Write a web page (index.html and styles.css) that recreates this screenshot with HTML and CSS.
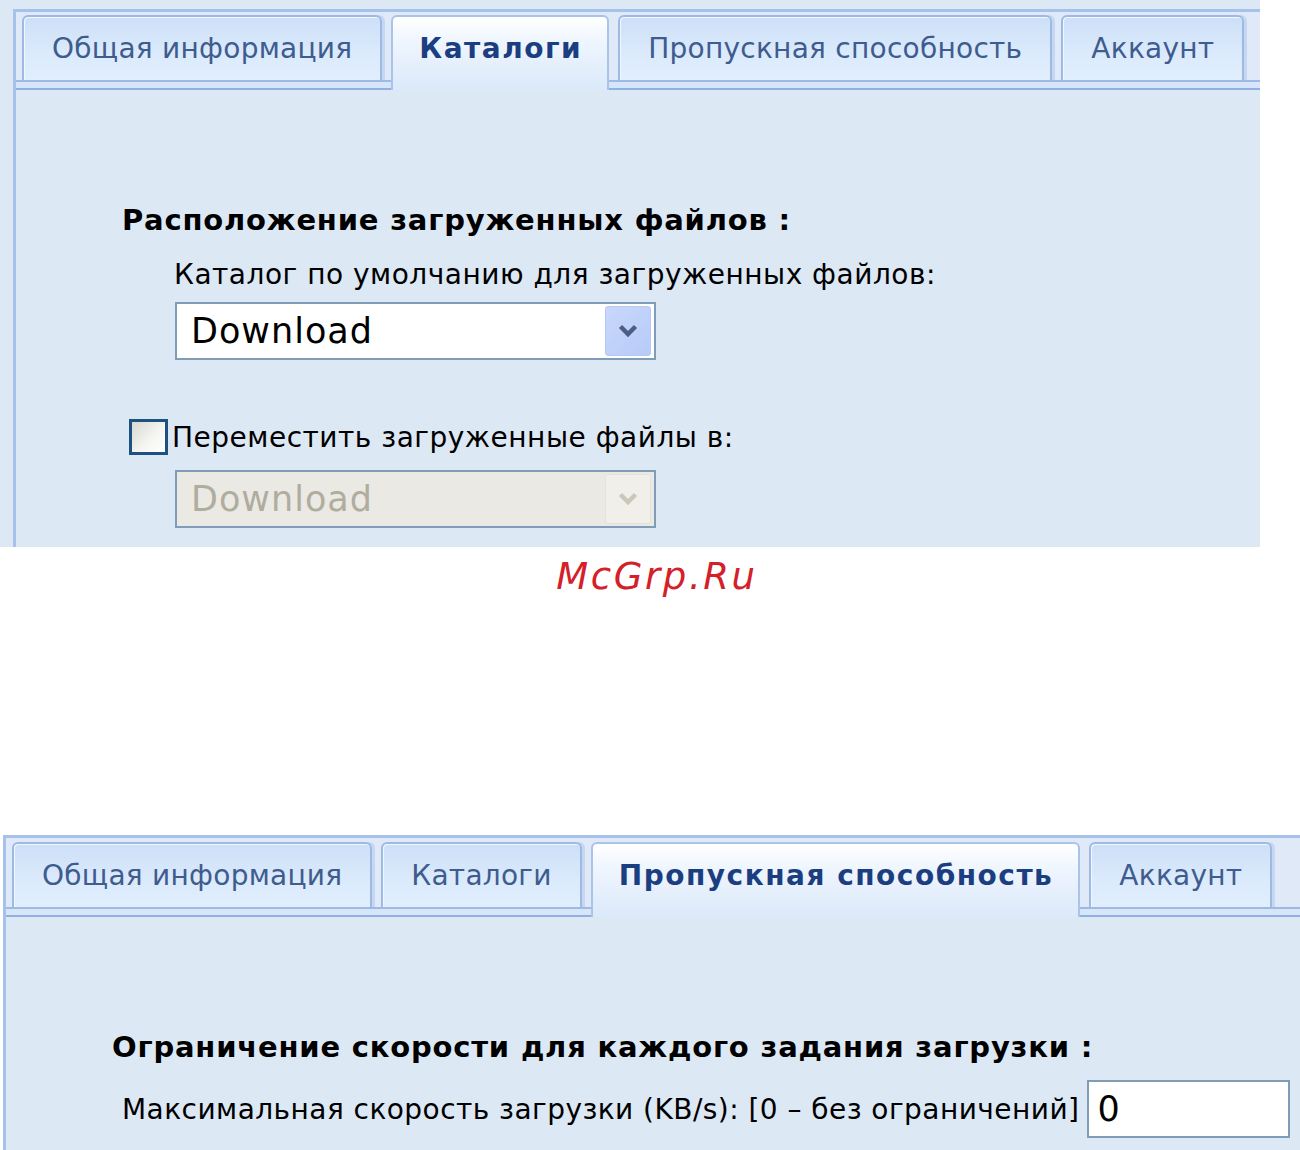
FILE: index.html
```html
<!DOCTYPE html>
<html>
  <head>
    <meta charset="UTF-8" />
    <title>Настройки</title>
    <link rel="stylesheet" href="styles.css">
  </head>
  <body>
    <div class="panel panel-top">
      <div class="frame">
        <div class="tabs">
          <div class="tab">Общая информация</div>
          <div class="tab active">Каталоги</div>
          <div class="tab">Пропускная способность</div>
          <div class="tab">Аккаунт</div>
        </div>
        <div class="tabs-line"></div>
        <div class="content">
          <div class="section-title">Расположение загруженных файлов :</div>
          <div class="field-label">Каталог по умолчанию для загруженных файлов:</div>
          <div class="combo">
            <span class="combo-text">Download</span>
            <span class="combo-btn">
              <svg width="20" height="14" viewBox="0 0 20 14"><path d="M2.5 2.5 L10 10 L17.5 2.5" fill="none" stroke="currentColor" stroke-width="4.5"/></svg>
            </span>
          </div>
          <div class="check-row">
            <span class="checkbox"></span>
            <span class="check-label">Переместить загруженные файлы в:</span>
          </div>
          <div class="combo disabled">
            <span class="combo-text">Download</span>
            <span class="combo-btn">
              <svg width="20" height="14" viewBox="0 0 20 14"><path d="M2.5 2.5 L10 10 L17.5 2.5" fill="none" stroke="currentColor" stroke-width="4.5"/></svg>
            </span>
          </div>
        </div>
      </div>
    </div>

    <div class="watermark">McGrp.Ru</div>

    <div class="panel panel-bottom">
      <div class="frame">
        <div class="tabs">
          <div class="tab">Общая информация</div>
          <div class="tab">Каталоги</div>
          <div class="tab active">Пропускная способность</div>
          <div class="tab">Аккаунт</div>
        </div>
        <div class="tabs-line"></div>
        <div class="content">
          <div class="section-title">Ограничение скорости для каждого задания загрузки :</div>
          <div class="speed-row">
            <span class="speed-label">Максимальная скорость загрузки (KB/s): [0 – без ограничений]</span>
            <div class="text-input">0</div>
          </div>
        </div>
      </div>
    </div>
  </body>
</html>
```

FILE: styles.css
```css
* {
  box-sizing: border-box;
}

body {
  margin: 0;
  background: #ffffff;
  font-family: "DejaVu Sans", Verdana, sans-serif;
  color: #000;
}

.panel {
  overflow: hidden;
  background: #dde8f5;
}

.panel-top {
  width: 1260px;
  height: 547px;
  padding: 9px 0 0 13px;
}

.panel-bottom {
  height: 315px;
  padding: 0 0 0 3px;
  background: #ffffff;
}

.frame {
  width: 1400px;
  height: 100%;
  border-left: 3px solid #a7c2ea;
  border-top: 3px solid #a7c2ea;
  background: #dde8f5;
}

.panel-top .frame .tabs {
  padding: 3px 0 0 6px;
}

.panel-bottom .frame .tabs {
  padding: 4px 0 0 6px;
}

/* tab strip */
.tabs {
  display: flex;
  align-items: flex-end;
  background: #dfe9f7;
}

.tab {
  height: 65px;
  padding: 0 28px;
  margin-right: 9px;
  display: flex;
  align-items: center;
  font-size: 28px;
  letter-spacing: 0.25px;
  color: #3f5c8e;
  white-space: nowrap;
  border: 2px solid #9dbae5;
  border-bottom: none;
  border-radius: 6px 6px 0 0;
  background: linear-gradient(#cddff8, #dcebfc 60%, #e0eefd);
  box-shadow: inset 1px 1px 0 #f1f7ff, 3px 0 0 #c6d8f1;
}

.tab.active {
  height: 75px;
  margin-bottom: -10px;
  padding: 0 25px 10px 26px;
  position: relative;
  z-index: 1;
  font-weight: bold;
  letter-spacing: 1.5px;
  color: #1b3e80;
  border-color: #a9c3e9;
  background: linear-gradient(#ffffff, #eef5fe 35%, #dbe9fa);
  box-shadow: none;
}

.tabs-line {
  height: 10px;
  border-top: 2px solid #9dbae5;
  border-bottom: 2px solid #8fb0e2;
  background: #d6e5f8;
}

.content {
  padding: 112px 0 0 106px;
}

.section-title {
  font-size: 29px;
  font-weight: bold;
  letter-spacing: 0.8px;
  line-height: 36px;
  white-space: nowrap;
}

.field-label {
  margin: 19px 0 0 52px;
  font-size: 28px;
  letter-spacing: 0.5px;
  line-height: 36px;
  white-space: nowrap;
}

/* dropdowns */
.combo {
  width: 481px;
  height: 58px;
  margin: 9px 0 0 53px;
  display: flex;
  align-items: center;
  justify-content: space-between;
  padding: 0 3px 0 14px;
  border: 2px solid #7f9db9;
  background: #fff;
  font-size: 35px;
  letter-spacing: 1px;
}

.combo-btn {
  width: 46px;
  height: 50px;
  display: flex;
  align-items: center;
  justify-content: center;
  border: 1px solid #b6c9f4;
  border-radius: 3px;
  background: linear-gradient(135deg, #c9d8fb, #b7cbf8);
  color: #4a5f86;
}

.combo.disabled {
  margin-top: 13px;
  background: #ebe9e3;
  color: #b0ad9f;
}

.combo.disabled .combo-btn {
  border-color: #e4e2da;
  background: #f1efea;
  color: #cbc8bb;
}

.check-row {
  display: flex;
  align-items: center;
  height: 40px;
  margin: 57px 0 0 7px;
}

.checkbox {
  width: 39px;
  height: 36px;
  margin-right: 4px;
  border: 3px solid #1c5180;
  background: linear-gradient(135deg, #d9d9d2, #f6f6f3 60%, #ffffff);
}

.check-label {
  font-size: 28px;
  letter-spacing: 0.5px;
  white-space: nowrap;
}

/* speed limit row */
.speed-row {
  display: flex;
  align-items: center;
  margin: 15px 0 0 10px;
}

.speed-label {
  font-size: 28px;
  letter-spacing: 0.45px;
  white-space: nowrap;
}

.text-input {
  width: 203px;
  height: 58px;
  margin-left: 8px;
  padding: 0 8px;
  display: flex;
  align-items: center;
  border: 2px solid #7f9db9;
  background: #fff;
  font-size: 35px;
}

.watermark {
  height: 288px;
  padding: 8px 0 0 14px;
  text-align: center;
  font-size: 37px;
  line-height: 44px;
  font-style: italic;
  letter-spacing: 2.6px;
  color: #d42028;
}
```
